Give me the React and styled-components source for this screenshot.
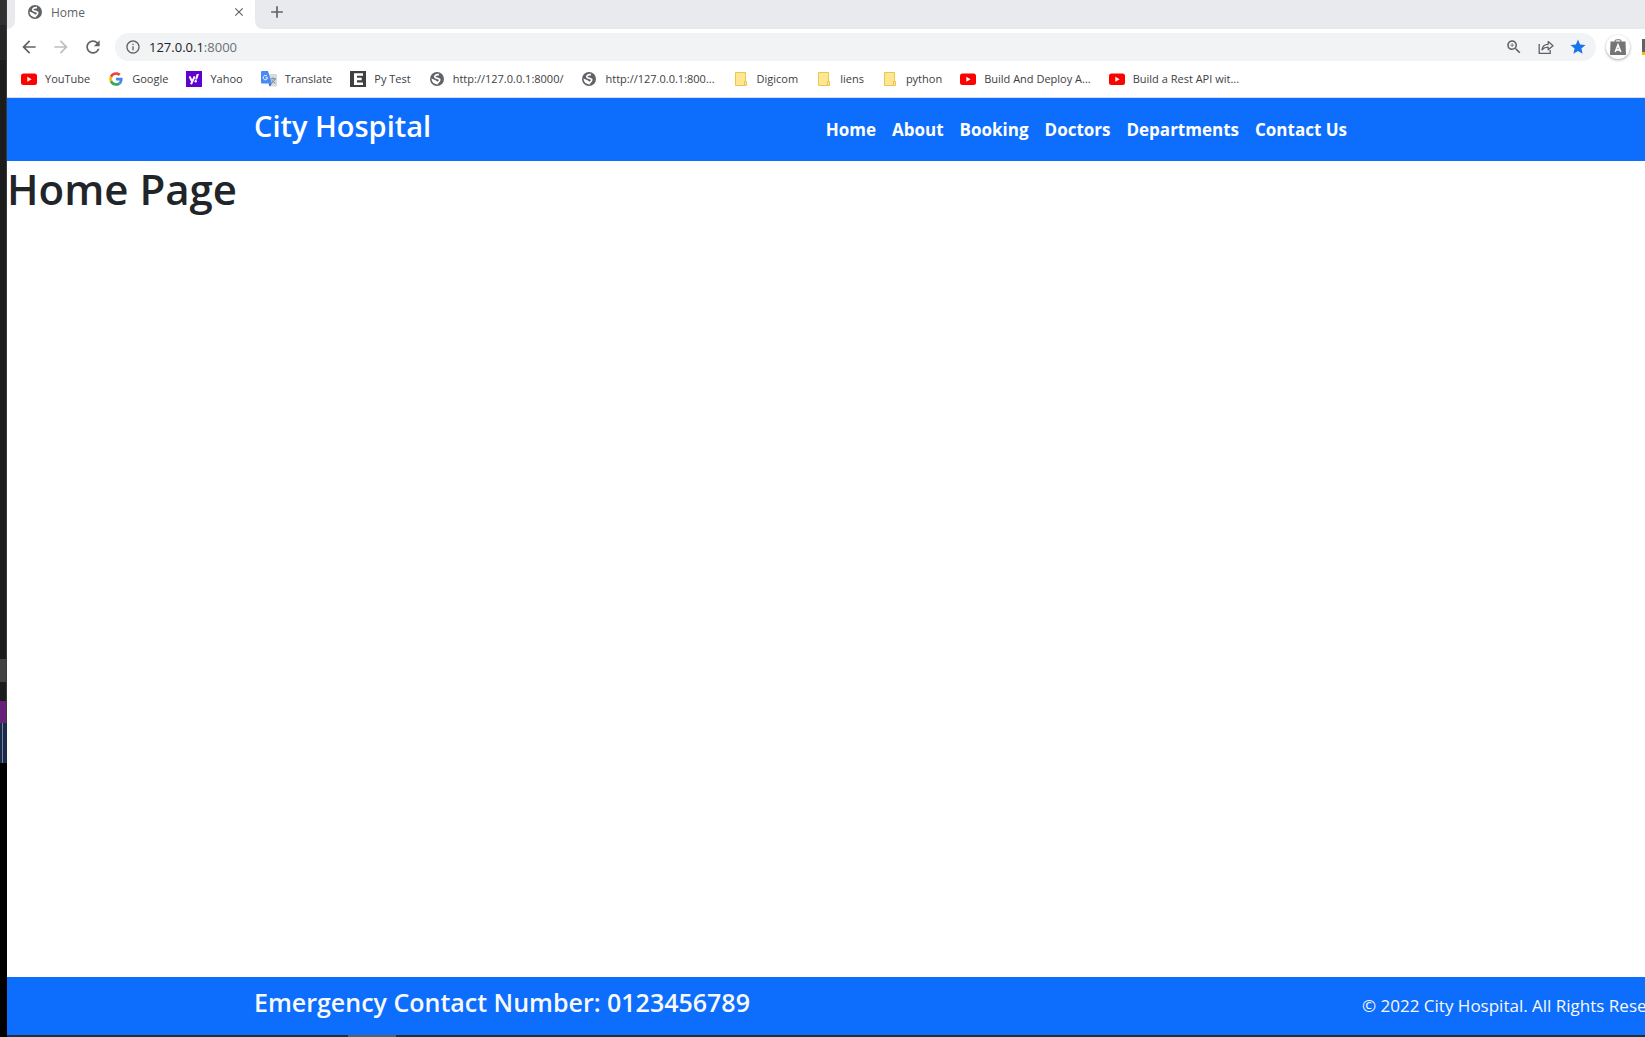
import React from 'react';
import styled, { createGlobalStyle } from 'styled-components';

const GlobalStyle = createGlobalStyle`
  *, *::before, *::after { box-sizing: border-box; }
  body {
    margin: 0;
    overflow: hidden;
    background: #fff;
    font-family: "Open Sans", "Noto Sans", sans-serif;
  }
  h1, h2, h3, p { margin: 0; }
  a { color: inherit; text-decoration: none; }
  button {
    display: flex;
    align-items: center;
    justify-content: center;
    padding: 0;
    border: 0;
    background: none;
  }
  svg { display: block; flex: none; }
`;

const Screen = styled.div`
  display: flex;
  height: 100vh;
`;

const Strip = styled.div`
  flex: none;
  display: flex;
  flex-direction: column;
  width: 7px;
  background: #000;
`;

const StripBlock = styled.div`
  height: ${(p) => p.$height}px;
  background: ${(p) => p.$color};
  border-right: 1px solid ${(p) => p.$edge || '#3a3a3a'};
`;

const Browser = styled.div`
  flex: 1;
  min-width: 0;
  display: flex;
  flex-direction: column;
`;

const TabBar = styled.div`
  flex: none;
  display: flex;
  height: 29px;
  background: #fff;
`;

const TabBarStart = styled.div`
  width: 8px;
  background: #e8eaed;
  border-bottom-right-radius: 8px;
`;

const TabBarRest = styled.div`
  flex: 1;
  background: #e8eaed;
  border-bottom-left-radius: 8px;
`;

const Tab = styled.div`
  display: flex;
  align-items: center;
  gap: 8px;
  width: 240px;
  padding: 0 8px 5px 12px;
  color: #5f6368;
  font-size: 12px;
`;

const TabTitle = styled.span`
  flex: 1;
`;

const TabButton = styled.button`
  width: 16px;
  height: 16px;
  color: #5f6368;
`;

const NewTab = styled.button`
  width: 44px;
  height: 24px;
  color: #5f6368;
`;

const Toolbar = styled.div`
  flex: none;
  display: flex;
  align-items: center;
  height: 36px;
  padding-left: 6px;
`;

const ToolButton = styled.button`
  width: 32px;
  height: 28px;
  color: ${(p) => (p.disabled ? '#bdbfc1' : '#5f6368')};
`;

const Omnibox = styled.div`
  flex: 1;
  display: flex;
  align-items: center;
  height: 28px;
  margin: 0 10px 0 6px;
  padding: 0 2px 0 10px;
  border-radius: 14px;
  background: #f1f3f4;
`;

const Address = styled.span`
  flex: 1;
  display: grid;
  align-items: center;
  padding-left: 8px;
  font-size: 13px;
  line-height: 20px;
`;

const AddressInput = styled.input`
  grid-area: 1 / 1;
  width: 100%;
  padding: 0;
  border: 0;
  outline: 0;
  background: none;
  color: transparent;
  font: inherit;
`;

const AddressText = styled.span`
  grid-area: 1 / 1;
  color: #6d7176;
  pointer-events: none;
`;

const AddressHost = styled.span`
  color: #202124;
`;

const Extension = styled.button`
  width: 24px;
  height: 24px;
  border-radius: 50%;
  background: #fff;
  box-shadow: 0 1px 3px rgba(0, 0, 0, 0.35);
`;

const CutExtension = styled.button`
  width: 3px;
  height: 16px;
  margin-left: 12px;
  justify-content: flex-start;
  overflow: hidden;
`;

const Bookmarks = styled.nav`
  flex: none;
  display: flex;
  gap: 18px;
  height: 33px;
  padding: 0 14px 5px;
  border-bottom: 1px solid #dadce0;
  color: #3c4043;
  font-size: 11px;
`;

const Bookmark = styled.a`
  flex: none;
  display: flex;
  align-items: center;
  gap: 8px;
  white-space: nowrap;
`;

const PageHeader = styled.header`
  flex: none;
  display: flex;
  align-items: center;
  justify-content: space-between;
  height: 63px;
  padding: 0 298px 0 247px;
  background: #0d6efd;
  color: #fff;
`;

const Brand = styled.h2`
  margin-bottom: 8px;
  font-size: 29px;
  font-weight: 600;
  line-height: 36px;
`;

const Menu = styled.nav`
  display: flex;
  gap: 16px;
  font-size: 17px;
  font-weight: 700;
  line-height: 24px;
`;

const Content = styled.main`
  flex: 1;
  color: #212529;
`;

const Title = styled.h1`
  font-size: 42px;
  font-weight: 600;
  line-height: 56px;
`;

const PageFooter = styled.footer`
  flex: none;
  display: flex;
  align-items: center;
  justify-content: space-between;
  height: 58px;
  padding-left: 247px;
  background: #0d6efd;
  color: #f8f9fa;
`;

const Emergency = styled.h3`
  margin-bottom: 8px;
  font-size: 25px;
  font-weight: 600;
  line-height: 30px;
`;

const Copyright = styled.p`
  width: 283px;
  overflow: hidden;
  font-size: 17px;
  line-height: 24px;
  white-space: nowrap;
`;

const Taskbar = styled.div`
  flex: none;
  height: 2px;
  padding-left: 341px;
  background: #20303c;
`;

const TaskbarItem = styled.div`
  width: 48px;
  height: 2px;
  background: #56616a;
`;

const Globe = () => (
  <svg width="16" height="16" viewBox="0 0 16 16">
    <circle cx="8" cy="8" r="7" fill="#5f6368" />
    <path d="M10 3.700C6.800 3.300 5 4.900 6 6.400S10.900 7 10.700 9 8.300 11 8.300 12.800" fill="none" stroke="#fff" strokeWidth="1.700" />
    <path d="M2.600 7.600L6.500 9.200 8.800 11v2.400C5.200 13.600 2.400 11 2.600 7.600z" fill="#fff" />
  </svg>
);

const YouTube = () => (
  <svg width="16" height="16" viewBox="0 0 16 16">
    <rect y="2.500" width="16" height="11.500" rx="2.500" fill="#f00" />
    <path d="M6.300 5.800v5l4.300-2.500z" fill="#fff" />
  </svg>
);

const Google = () => (
  <svg width="16" height="16" viewBox="-4 -4 56 56">
    <path fill="#EA4335" d="M24 9.500c3.540 0 6.710 1.220 9.210 3.600l6.850-6.850C35.900 2.380 30.470 0 24 0 14.620 0 6.510 5.380 2.560 13.220l7.980 6.190C12.430 13.720 17.740 9.500 24 9.500z" />
    <path fill="#4285F4" d="M46.980 24.550c0-1.570-.15-3.090-.38-4.550H24v9.020h12.940c-.58 2.960-2.260 5.480-4.780 7.180l7.730 6c4.510-4.180 7.090-10.360 7.090-17.650z" />
    <path fill="#FBBC05" d="M10.530 28.590c-.48-1.450-.76-2.990-.76-4.590s.27-3.140.76-4.590l-7.980-6.190C.92 16.460 0 20.120 0 24c0 3.880.92 7.540 2.560 10.780l7.970-6.190z" />
    <path fill="#34A853" d="M24 48c6.480 0 11.930-2.130 15.890-5.810l-7.730-6c-2.150 1.450-4.920 2.300-8.160 2.300-6.260 0-11.570-4.220-13.470-9.910l-7.980 6.190C6.510 42.620 14.620 48 24 48z" />
  </svg>
);

const Yahoo = () => (
  <svg width="16" height="16" viewBox="0 0 16 16">
    <path fill="#5f01d1" d="M0 0h16v16H0z" />
    <path d="M3.600 5.400l2.200 4.800M8.700 5.400L5 13.200" fill="none" stroke="#fff" strokeWidth="2" />
    <path d="M10.700 3h2.300l-2 5.500H9.200z" fill="#fff" />
    <circle cx="9.700" cy="10.300" r="1.200" fill="#fff" />
  </svg>
);

const Translate = () => (
  <svg width="16" height="16" viewBox="0 0 16 16">
    <path d="M6 3h9.500l.5.500V15.500H9.500z" fill="#d8dadd" />
    <path d="M9.500 7.800h5.500M12 6.500v1.300M14 8c-.6 2-2 3.300-3.600 4.200M10.800 9c.8 1.600 2 2.600 3.500 3.300" fill="none" stroke="#6b8794" />
    <path d="M7.500 12.500h3.300L8.800 15.800z" fill="#3059b8" />
    <path d="M1 0h6l3.900 12.500H1a1 1 0 0 1-1-1V1a1 1 0 0 1 1-1z" fill="#4a8af4" />
    <path d="M6 5.100A2.200 2.200 0 1 0 6.600 6.800H4.500" fill="none" stroke="#fff" />
  </svg>
);

const PyTest = () => (
  <svg width="16" height="16" viewBox="0 0 16 16">
    <path fill="#404040" d="M0 0h16v16H0z" />
    <path d="M4 2.200h9v2.600H7v2h4.700v2.400H7v2.200h6v2.500H4z" fill="#fff" />
  </svg>
);

const Folder = () => (
  <svg width="16" height="16" viewBox="0 0 16 16">
    <path d="M2.500 1.500h10v13h-10z" fill="#ffe693" stroke="#e9c650" />
    <path d="M11.500 10.500h2v4h-2z" fill="#ffe693" stroke="#e9c650" />
  </svg>
);

const ICON_PATHS = {
  back: 'M20 11H7.830l5.590-5.590L12 4l-8 8 8 8 1.410-1.410L7.830 13H20v-2z',
  forward: 'M12 4l-1.410 1.410L16.170 11H4v2h12.170l-5.580 5.590L12 20l8-8z',
  reload:
    'M17.650 6.350C16.200 4.900 14.210 4 12 4c-4.420 0-7.990 3.580-7.990 8s3.570 8 7.990 8c3.730 0 6.840-2.550 7.730-6h-2.080c-.82 2.330-3.040 4-5.650 4-3.310 0-6-2.690-6-6s2.690-6 6-6c1.660 0 3.140.69 4.220 1.780L13 11h7V4l-2.350 2.350z',
  info: 'M11 7h2v2h-2zm0 4h2v6h-2zm1-9C6.480 2 2 6.480 2 12s4.480 10 10 10 10-4.480 10-10S17.520 2 12 2zm0 18c-4.410 0-8-3.590-8-8s3.590-8 8-8 8 3.590 8 8-3.590 8-8 8z',
  zoom: 'M15.500 14h-.79l-.28-.27C15.410 12.590 16 11.110 16 9.500 16 5.910 13.090 3 9.500 3S3 5.910 3 9.500 5.910 16 9.500 16c1.610 0 3.090-.59 4.230-1.570l.27.28v.79l5 4.990L20.490 19l-4.990-5zm-6 0C7.010 14 5 11.990 5 9.500S7.010 5 9.500 5 14 7.010 14 9.500 11.990 14 9.500 14zm2.500-4h-2v2H9v-2H7V9h2V7h1v2h2v1z',
  star: 'M12 17.270L18.180 21l-1.640-7.030L22 9.240l-7.190-.61L12 2 9.190 8.630 2 9.240l5.460 4.730L5.820 21z',
  close:
    'M19 6.410L17.590 5 12 10.590 6.410 5 5 6.410 10.590 12 5 17.590 6.410 19 12 13.410 17.590 19 19 17.590 13.410 12z',
  add: 'M19 13h-6v6h-2v-6H5v-2h6V5h2v6h6v2z',
};

const Icon = ({ name, size, color = 'currentColor' }) => (
  <svg width={size} height={size} viewBox="0 0 24 24" fill={color}>
    <path d={ICON_PATHS[name]} />
  </svg>
);

const ShareIcon = () => (
  <svg width="16" height="16" viewBox="0 0 16 16" fill="none" stroke="#5f6368" strokeWidth="1.300">
    <path d="M1.200 5v9.300h11V11" />
    <path d="M4 10.800c.4-3.600 2.600-5.500 6.200-5.500V2.600L15 6.800l-4.800 4V8.200C7.500 8.200 5.600 9 4 10.800z" strokeLinejoin="round" />
  </svg>
);

const BagIcon = () => (
  <svg width="18" height="18" viewBox="0 0 18 18">
    <path d="M6 4.500V3.200C6 1 12 1 12 3.200v1.300" fill="none" stroke="#8a8a8a" strokeWidth="1.300" />
    <path d="M1.500 3.500h15l.5 13.500H1z" fill="#757575" />
    <path d="M6.200 14L9 7l2.800 7M7.200 11.900h3.600" fill="none" stroke="#fff" strokeWidth="1.600" />
  </svg>
);

const DarkTile = () => (
  <svg width="4" height="16" viewBox="0 0 4 16">
    <path d="M0 0h4v16H0z" fill="#5f6368" />
    <path d="M0 13h3v3H0z" fill="#fbbc04" />
  </svg>
);

const STRIP = [
  [25, '#303030'],
  [35, '#262626'],
  [599, '#1c1c1c'],
  [23, '#424242'],
  [19, '#1c1c1c'],
  [22, '#68217a'],
  [40, 'linear-gradient(90deg, #1b2a4b 2px, #7d879c 2px 3px, #1b2a4b 3px)', '#1b2a4b'],
];

const BOOKMARKS = [
  [YouTube, 'YouTube'],
  [Google, 'Google'],
  [Yahoo, 'Yahoo'],
  [Translate, 'Translate'],
  [PyTest, 'Py Test'],
  [Globe, 'http://127.0.0.1:8000/'],
  [Globe, 'http://127.0.0.1:800...'],
  [Folder, 'Digicom'],
  [Folder, 'liens'],
  [Folder, 'python'],
  [YouTube, 'Build And Deploy A...'],
  [YouTube, 'Build a Rest API wit...'],
];

const MENU = ['Home', 'About', 'Booking', 'Doctors', 'Departments', 'Contact Us'];

export default function App() {
  return (
    <Screen>
      <GlobalStyle />
      <Strip>
        {STRIP.map(([height, color, edge], i) => (
          <StripBlock key={i} $height={height} $color={color} $edge={edge} />
        ))}
      </Strip>
      <Browser>
        <TabBar>
          <TabBarStart />
          <Tab>
            <Globe />
            <TabTitle>Home</TabTitle>
            <TabButton aria-label="Close tab">
              <Icon name="close" size={14} />
            </TabButton>
          </Tab>
          <TabBarRest>
            <NewTab aria-label="New tab">
              <Icon name="add" size={20} />
            </NewTab>
          </TabBarRest>
        </TabBar>
        <Toolbar>
          <ToolButton aria-label="Back">
            <Icon name="back" size={20} />
          </ToolButton>
          <ToolButton aria-label="Forward" disabled>
            <Icon name="forward" size={20} />
          </ToolButton>
          <ToolButton aria-label="Reload">
            <Icon name="reload" size={20} />
          </ToolButton>
          <Omnibox>
            <Icon name="info" size={16} color="#5f6368" />
            <Address>
              <AddressInput aria-label="Address" />
              <AddressText>
                <AddressHost>127.0.0.1</AddressHost>:8000
              </AddressText>
            </Address>
            <ToolButton aria-label="Zoom">
              <Icon name="zoom" size={18} />
            </ToolButton>
            <ToolButton aria-label="Share">
              <ShareIcon />
            </ToolButton>
            <ToolButton aria-label="Bookmark this page">
              <Icon name="star" size={18} color="#1a73e8" />
            </ToolButton>
          </Omnibox>
          <Extension aria-label="Extension">
            <BagIcon />
          </Extension>
          <CutExtension aria-label="More extensions">
            <DarkTile />
          </CutExtension>
        </Toolbar>
        <Bookmarks>
          {BOOKMARKS.map(([Mark, label]) => (
            <Bookmark href="#" key={label}>
              <Mark />
              {label}
            </Bookmark>
          ))}
        </Bookmarks>
        <PageHeader>
          <Brand>City Hospital</Brand>
          <Menu>
            {MENU.map((item) => (
              <a href="#" key={item}>
                {item}
              </a>
            ))}
          </Menu>
        </PageHeader>
        <Content>
          <Title>Home Page</Title>
        </Content>
        <PageFooter>
          <Emergency>Emergency Contact Number: 0123456789</Emergency>
          <Copyright>© 2022 City Hospital. All Rights Reserved</Copyright>
        </PageFooter>
        <Taskbar>
          <TaskbarItem />
        </Taskbar>
      </Browser>
    </Screen>
  );
}
